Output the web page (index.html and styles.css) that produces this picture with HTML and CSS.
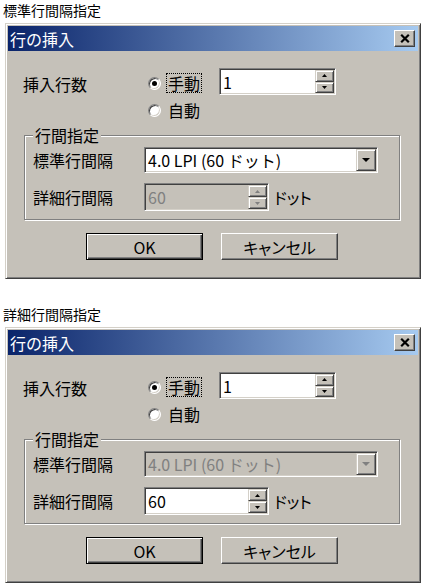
FILE: index.html
```html
<!DOCTYPE html>
<html lang="ja">
<head>
<meta charset="utf-8">
<title>行の挿入</title>
<link rel="stylesheet" href="styles.css">
</head>
<body>
<div class="caption">標準行間隔指定</div>
<div class="window">
  <div class="titlebar">
    <span class="title">行の挿入</span>
    <span class="close"><svg width="10" height="9" viewBox="0 0 10 9"><path d="M1.2 0.8 L8.8 8.2 M8.8 0.8 L1.2 8.2" stroke="#000" stroke-width="2.2" fill="none"/></svg></span>
  </div>
  <div class="body">
    <div class="top-grid">
      <span class="count-label">挿入行数</span>
      <div class="radio radio-manual"><span class="dot checked"></span><span class="rtext focus">手動</span></div>
      <div class="field spin-count">
        <span class="ftext">1</span>
        <span class="spins">
          <span class="sbtn"><svg width="5" height="3" viewBox="0 0 5 3"><polygon points="0,3 2.5,0 5,3" fill="#000"/></svg></span>
          <span class="sbtn"><svg width="5" height="3" viewBox="0 0 5 3"><polygon points="0,0 5,0 2.5,3" fill="#000"/></svg></span>
        </span>
      </div>
      <div class="radio radio-auto"><span class="dot"></span><span class="rtext">自動</span></div>
    </div>
    <fieldset class="group">
      <legend class="legend">行間指定</legend>
      <div class="grow">
        <span class="glabel">標準行間隔</span>
        <div class="field combo">
          <span class="ftext">4.0 LPI (60 ドット)</span>
          <span class="dbtn"><svg width="8" height="4" viewBox="0 0 8 4"><polygon points="0,0 8,0 4,4" fill="#000"/></svg></span>
        </div>
      </div>
      <div class="grow grow-second">
        <span class="glabel">詳細行間隔</span>
        <div class="field spin-detail disabled">
          <span class="ftext">60</span>
          <span class="spins">
            <span class="sbtn"><svg width="5" height="3" viewBox="0 0 5 3"><polygon points="0,3 2.5,0 5,3" fill="#808080"/></svg></span>
            <span class="sbtn"><svg width="5" height="3" viewBox="0 0 5 3"><polygon points="0,0 5,0 2.5,3" fill="#808080"/></svg></span>
          </span>
        </div>
        <span class="unit">ドット</span>
      </div>
    </fieldset>
    <div class="buttons">
      <span class="btn default">OK</span>
      <span class="btn">キャンセル</span>
    </div>
  </div>
</div>

<div class="caption caption-second">詳細行間隔指定</div>
<div class="window">
  <div class="titlebar">
    <span class="title">行の挿入</span>
    <span class="close"><svg width="10" height="9" viewBox="0 0 10 9"><path d="M1.2 0.8 L8.8 8.2 M8.8 0.8 L1.2 8.2" stroke="#000" stroke-width="2.2" fill="none"/></svg></span>
  </div>
  <div class="body">
    <div class="top-grid">
      <span class="count-label">挿入行数</span>
      <div class="radio radio-manual"><span class="dot checked"></span><span class="rtext focus">手動</span></div>
      <div class="field spin-count">
        <span class="ftext">1</span>
        <span class="spins">
          <span class="sbtn"><svg width="5" height="3" viewBox="0 0 5 3"><polygon points="0,3 2.5,0 5,3" fill="#000"/></svg></span>
          <span class="sbtn"><svg width="5" height="3" viewBox="0 0 5 3"><polygon points="0,0 5,0 2.5,3" fill="#000"/></svg></span>
        </span>
      </div>
      <div class="radio radio-auto"><span class="dot"></span><span class="rtext">自動</span></div>
    </div>
    <fieldset class="group">
      <legend class="legend">行間指定</legend>
      <div class="grow">
        <span class="glabel">標準行間隔</span>
        <div class="field combo disabled">
          <span class="ftext">4.0 LPI (60 ドット)</span>
          <span class="dbtn"><svg width="8" height="4" viewBox="0 0 8 4"><polygon points="0,0 8,0 4,4" fill="#808080"/></svg></span>
        </div>
      </div>
      <div class="grow grow-second">
        <span class="glabel">詳細行間隔</span>
        <div class="field spin-detail">
          <span class="ftext">60</span>
          <span class="spins">
            <span class="sbtn"><svg width="5" height="3" viewBox="0 0 5 3"><polygon points="0,3 2.5,0 5,3" fill="#000"/></svg></span>
            <span class="sbtn"><svg width="5" height="3" viewBox="0 0 5 3"><polygon points="0,0 5,0 2.5,3" fill="#000"/></svg></span>
          </span>
        </div>
        <span class="unit">ドット</span>
      </div>
    </fieldset>
    <div class="buttons">
      <span class="btn default">OK</span>
      <span class="btn">キャンセル</span>
    </div>
  </div>
</div>
</body>
</html>
```

FILE: styles.css
```css
* { box-sizing: border-box; }

body {
  margin: 0;
  background: #fff;
  color: #000;
  font-family: "Noto Sans CJK JP", "Noto Sans", sans-serif;
  font-size: 16px;
}

.caption {
  height: 20px;
  line-height: 20px;
  font-size: 14px;
  padding-left: 3px;
  margin-bottom: 3px;
}

.caption-second { margin-top: 25px; }

.window {
  width: 416px;
  margin-left: 5px;
  background: #c5c1b9;
  border: 1px solid;
  border-color: #d4d0c8 #404040 #404040 #d4d0c8;
  box-shadow: inset 1px 1px 0 #fff, inset -1px -1px 0 #808080;
  padding: 2px;
}

.titlebar {
  height: 25px;
  display: flex;
  align-items: center;
  justify-content: space-between;
  padding: 0 3px 0 2px;
  background: linear-gradient(to right, #0a246a, #a6caf0);
}

.title {
  color: #fff;
  font-size: 16px;
  line-height: 16px;
}

.close {
  width: 21px;
  height: 17px;
  display: flex;
  align-items: center;
  justify-content: center;
  background: #c5c1b9;
  border: 1px solid;
  border-color: #fff #404040 #404040 #fff;
  box-shadow: inset -1px -1px 0 #808080;
}

.body { padding: 17px 0 16px 0; }

.top-grid {
  display: grid;
  grid-template-columns: 125px 71px 117px;
  grid-template-rows: 27px 20px;
  row-gap: 5px;
  padding-left: 15px;
}

.count-label {
  grid-row: 1;
  grid-column: 1;
  margin-top: 8px;
  line-height: 16px;
}

.radio {
  display: flex;
  align-items: center;
  gap: 5px;
  height: 20px;
}

.radio-manual { grid-row: 1; grid-column: 2; margin-top: 5px; }
.radio-auto { grid-row: 2; grid-column: 2; }
.spin-count { grid-row: 1; grid-column: 3; }

.dot {
  width: 13px;
  height: 13px;
  flex: none;
  border-radius: 50%;
  border: 1px solid;
  border-color: #808080 #fff #fff #808080;
  background: #fff;
  box-shadow: inset 1px 1px 0 #404040, inset -1px -1px 0 #d4d0c8;
  display: flex;
  align-items: center;
  justify-content: center;
}

.dot.checked::after {
  content: "";
  width: 5px;
  height: 5px;
  border-radius: 50%;
  background: #000;
}

.rtext {
  border: 1px dotted transparent;
  padding: 1px;
  line-height: 16px;
}

.rtext.focus { border-color: #000; }

.field {
  display: flex;
  background: #fff;
  border: 1px solid;
  border-color: #808080 #fff #fff #808080;
  box-shadow: inset 1px 1px 0 #404040, inset -1px -1px 0 #d4d0c8;
  padding: 1px;
}

.field.disabled { background: #c5c1b9; }
.field.disabled .ftext { color: #808080; }

.ftext {
  flex: 1;
  display: flex;
  align-items: center;
  padding-left: 2px;
  line-height: 16px;
  white-space: nowrap;
  overflow: hidden;
}

.spin-count { width: 117px; height: 27px; }
.combo { width: 234px; height: 26px; }
.spin-detail { width: 125px; height: 28px; }

.spins {
  width: 19px;
  display: flex;
  flex-direction: column;
}

.sbtn {
  flex: 1;
  display: flex;
  align-items: center;
  justify-content: center;
  background: #c5c1b9;
  border: 1px solid;
  border-color: #d4d0c8 #404040 #404040 #d4d0c8;
  box-shadow: inset 1px 1px 0 #fff, inset -1px -1px 0 #808080;
}

.dbtn {
  width: 20px;
  display: flex;
  align-items: center;
  justify-content: center;
  background: #c5c1b9;
  border: 1px solid;
  border-color: #d4d0c8 #404040 #404040 #d4d0c8;
  box-shadow: inset 1px 1px 0 #fff, inset -1px -1px 0 #808080;
}

.group {
  margin: 7px 18px 0 16px;
  padding: 4px 0 8px 8px;
  border: 1px solid #808080;
  box-shadow: 1px 1px 0 #fff, inset 1px 1px 0 #fff;
  min-width: 0;
}

.legend {
  padding: 0 2px;
  margin: 0;
  line-height: 16px;
  background: #c5c1b9;
}

.grow {
  display: flex;
  align-items: center;
}

.grow-second { margin-top: 10px; }

.glabel {
  width: 111px;
  line-height: 16px;
}

.unit {
  margin-left: 5px;
  line-height: 16px;
  font-feature-settings: "palt";
}

.buttons {
  display: flex;
  gap: 18px;
  margin-top: 13px;
  padding-left: 78px;
}

.btn {
  width: 117px;
  height: 27px;
  display: flex;
  align-items: center;
  justify-content: center;
  background: #c5c1b9;
  border: 1px solid;
  border-color: #fff #404040 #404040 #fff;
  box-shadow: inset -1px -1px 0 #808080;
  line-height: 16px;
  font-feature-settings: "palt";
}

.btn.default {
  border-color: #000;
  box-shadow: inset 1px 1px 0 #fff, inset -1px -1px 0 #404040, inset -2px -2px 0 #808080;
}
```
